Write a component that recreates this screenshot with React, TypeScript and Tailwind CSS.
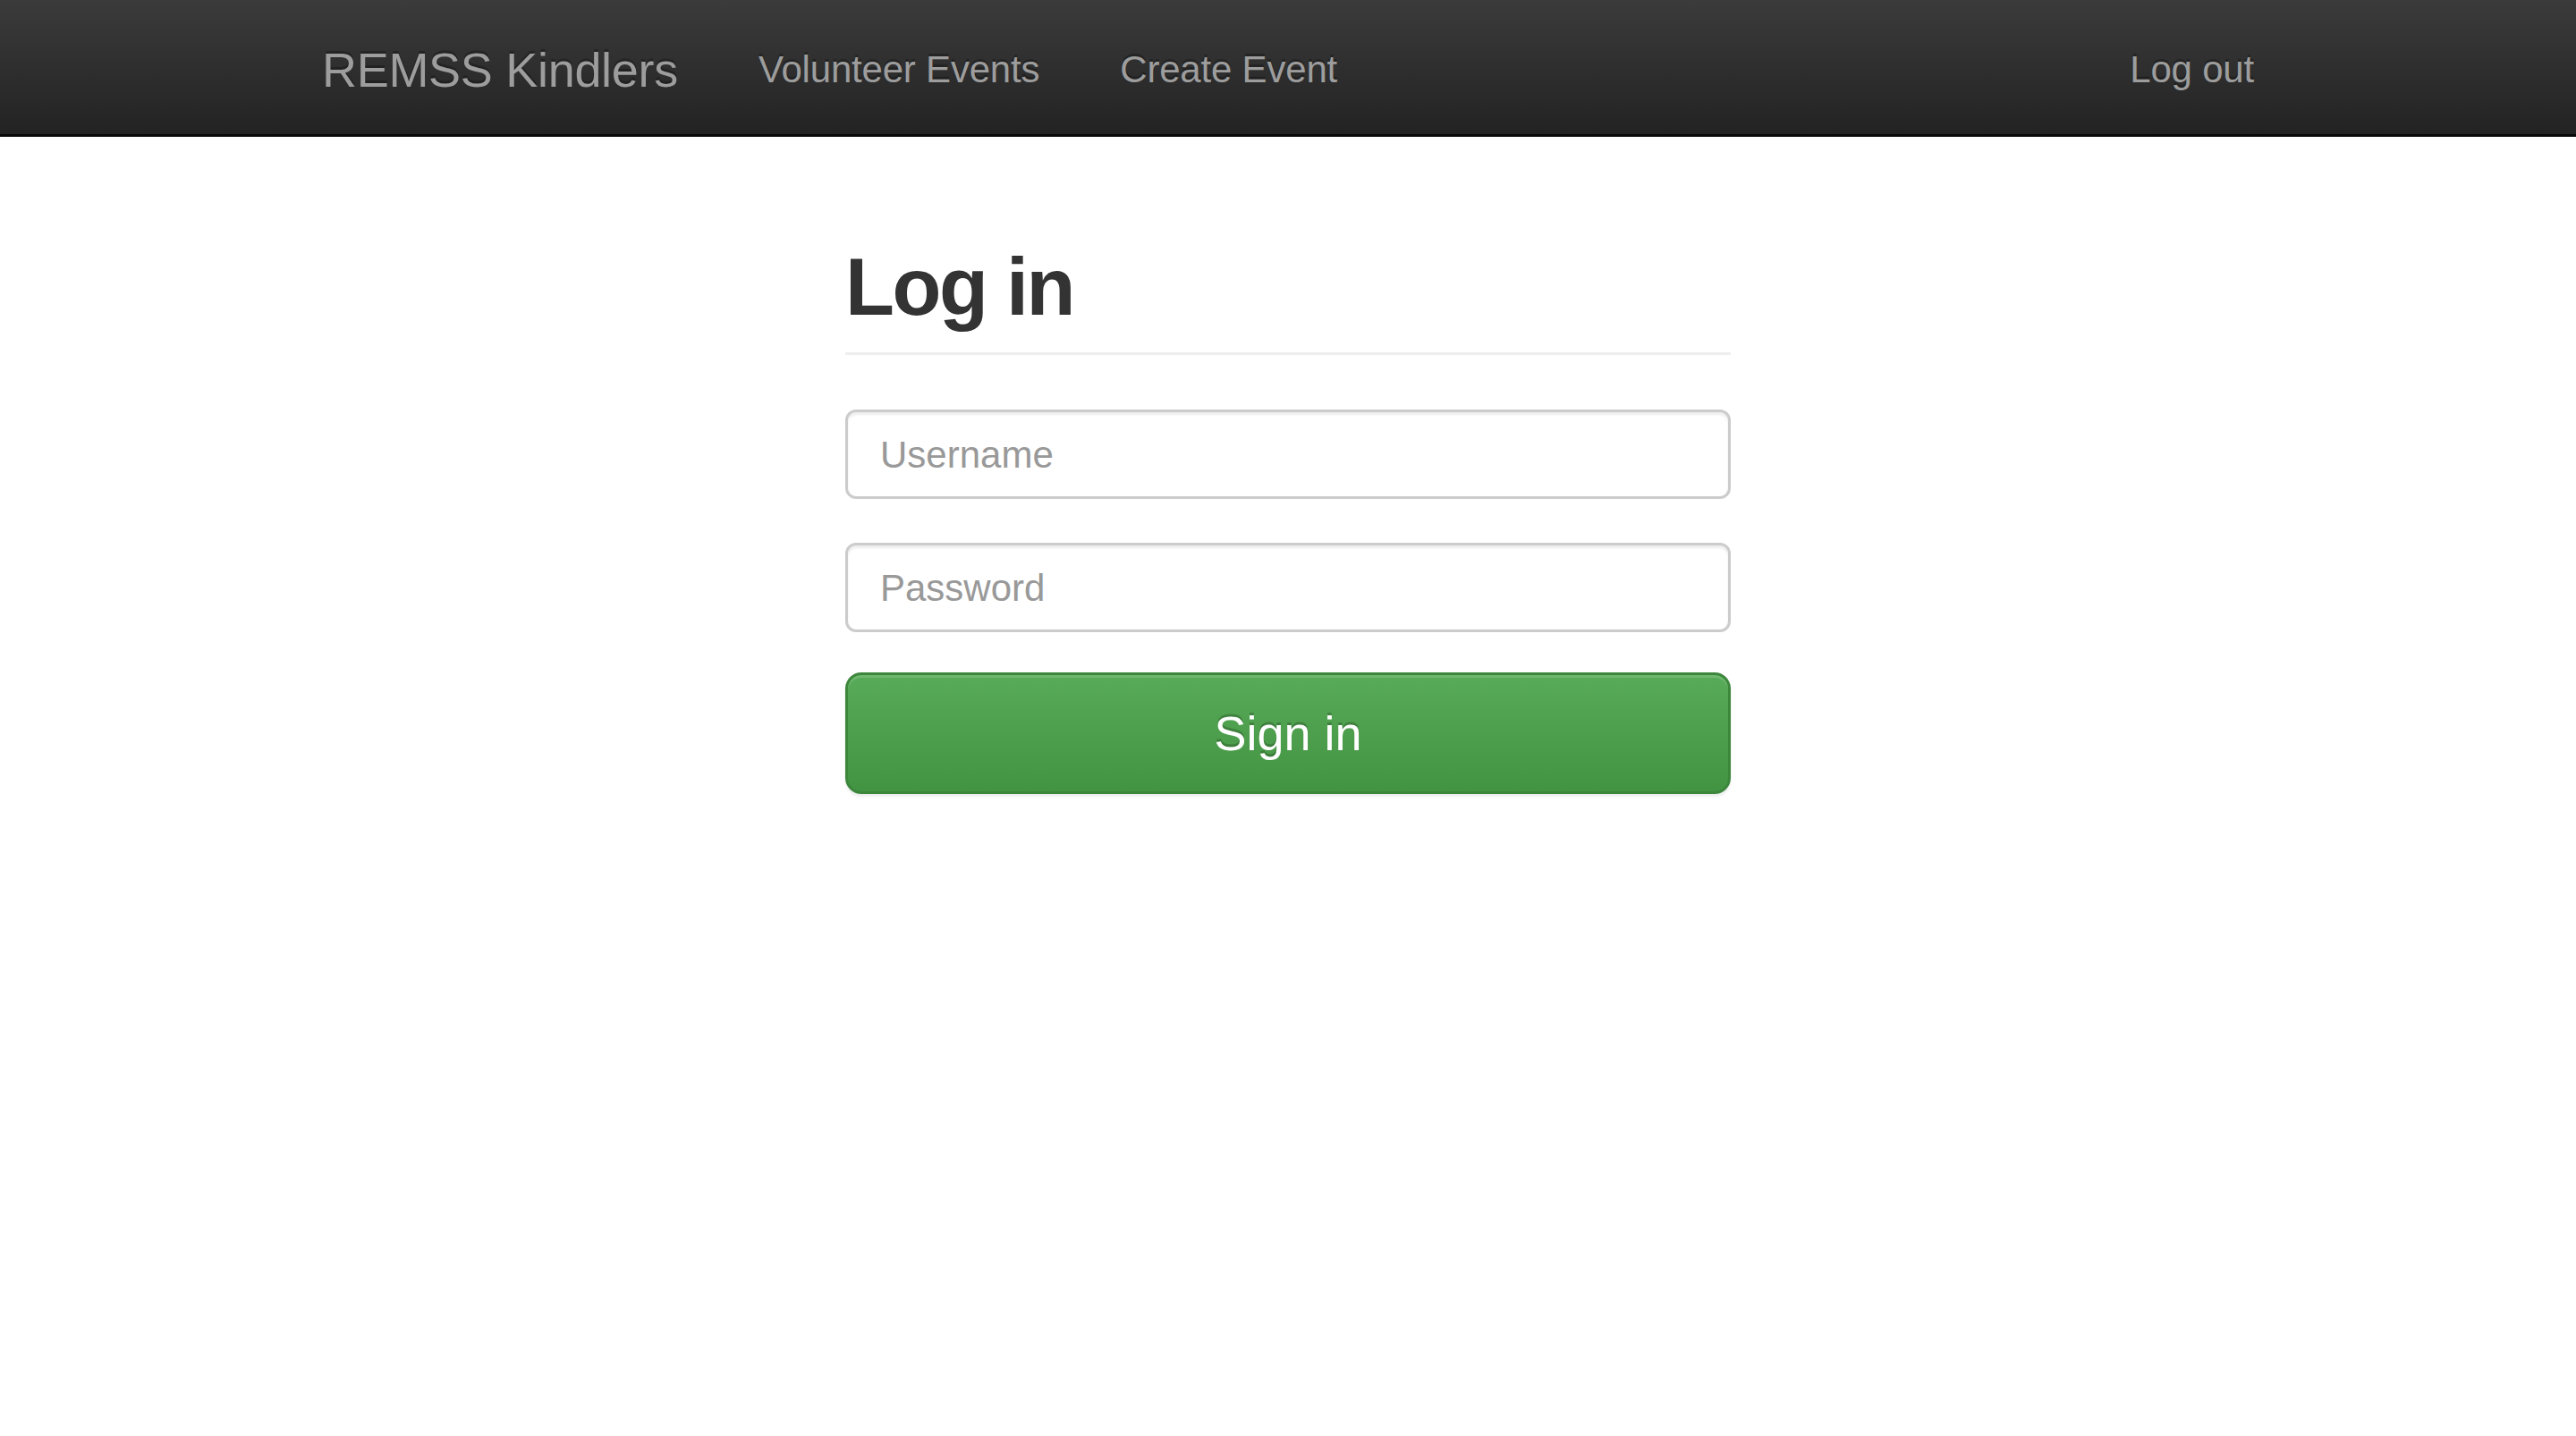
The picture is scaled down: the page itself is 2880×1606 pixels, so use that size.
import React, { useState } from 'react';

const font = { fontFamily: '"Liberation Sans", Arial, Helvetica, sans-serif' };

const App: React.FC = () => {
  const [username, setUsername] = useState('');
  const [password, setPassword] = useState('');

  return (
    <div className="min-h-screen bg-white text-[#333]" style={font}>
      <nav className="h-[153px] border-b-[3px] border-[#080808] bg-gradient-to-b from-[#3b3b3b] to-[#232323]">
        <div className="mx-auto flex h-[150px] w-[2250px] items-center px-[45px]">
          <a
            href="#"
            className="-ml-[45px] flex h-[150px] items-center px-[45px] pt-[6px] text-[54px] leading-[60px] tracking-[-0.3px] text-[#9d9d9d] [text-shadow:0_-3px_0_rgba(0,0,0,0.25)]"
          >
            REMSS Kindlers
          </a>
          <a
            href="#"
            className="flex h-[150px] items-center px-[45px] pt-[6px] text-[42px] leading-[60px] tracking-[-0.2px] text-[#9d9d9d] [text-shadow:0_-3px_0_rgba(0,0,0,0.25)]"
          >
            Volunteer Events
          </a>
          <a
            href="#"
            className="flex h-[150px] items-center px-[45px] pt-[6px] text-[42px] leading-[60px] tracking-[-0.2px] text-[#9d9d9d] [text-shadow:0_-3px_0_rgba(0,0,0,0.25)]"
          >
            Create Event
          </a>
          <a
            href="#"
            className="-mr-[45px] ml-auto flex h-[150px] items-center px-[45px] pt-[6px] text-[42px] leading-[60px] tracking-[-0.2px] text-[#9d9d9d] [text-shadow:0_-3px_0_rgba(0,0,0,0.25)]"
          >
            Log out
          </a>
        </div>
      </nav>

      <div className="mx-auto w-[2250px] px-[45px] pt-[119px]">
        <form className="mx-auto flex w-[990px] flex-col" onSubmit={(e) => e.preventDefault()}>
          <h2 className="border-b-[3px] border-[#eee] pb-[23px] text-[90px] font-bold leading-[99px] tracking-[-2.5px] text-[#333]">
            Log in
          </h2>
          <input
            type="text"
            placeholder="Username"
            value={username}
            onChange={(e) => setUsername(e.target.value)}
            className="mt-[61px] h-[100px] w-full rounded-[12px] border-[3px] border-[#ccc] bg-white px-[36px] pt-[2px] text-[42px] text-[#555] shadow-[inset_0_3px_3px_rgba(0,0,0,0.075)] outline-none placeholder:text-[#999]"
          />
          <input
            type="password"
            placeholder="Password"
            value={password}
            onChange={(e) => setPassword(e.target.value)}
            className="mt-[49px] h-[100px] w-full rounded-[12px] border-[3px] border-[#ccc] bg-white px-[36px] pt-[2px] text-[42px] text-[#555] shadow-[inset_0_3px_3px_rgba(0,0,0,0.075)] outline-none placeholder:text-[#999]"
          />
          <button
            type="submit"
            className="mt-[45px] h-[136px] w-full rounded-[18px] border-[3px] border-[#3d873d] bg-gradient-to-b from-[#58ab58] to-[#429342] text-[54px] text-white shadow-[inset_0_3px_0_rgba(255,255,255,0.15),0_3px_3px_rgba(0,0,0,0.075)] [text-shadow:0_-3px_0_rgba(0,0,0,0.2)]"
          >
            Sign in
          </button>
        </form>
      </div>
    </div>
  );
};

export default App;
